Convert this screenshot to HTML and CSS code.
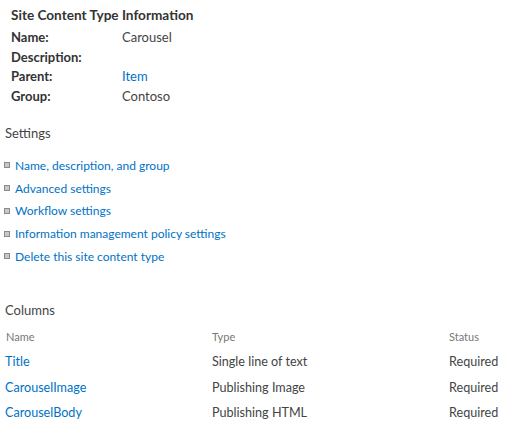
FILE: index.html
```html
<!DOCTYPE html>
<html>
<head>
<meta charset="utf-8">
<link rel="stylesheet" href="styles.css">
</head>
<body>
<div class="page">
  <section class="info">
    <h2 class="info-title">Site Content Type Information</h2>
    <div class="info-grid">
      <div class="label">Name:</div><div class="value">Carousel</div>
      <div class="label">Description:</div><div class="value"></div>
      <div class="label">Parent:</div><div class="value"><a class="link" href="#">Item</a></div>
      <div class="label">Group:</div><div class="value">Contoso</div>
    </div>
  </section>

  <section class="settings">
    <h3 class="section-title">Settings</h3>
    <ul class="settings-list">
      <li><span class="bullet"></span><a class="link" href="#">Name, description, and group</a></li>
      <li><span class="bullet"></span><a class="link" href="#">Advanced settings</a></li>
      <li><span class="bullet"></span><a class="link" href="#">Workflow settings</a></li>
      <li><span class="bullet"></span><a class="link" href="#">Information management policy settings</a></li>
      <li><span class="bullet"></span><a class="link" href="#">Delete this site content type</a></li>
    </ul>
  </section>

  <section class="columns">
    <h3 class="section-title">Columns</h3>
    <div class="col-table">
      <div class="col-row head">
        <div class="c-name">Name</div><div class="c-type">Type</div><div class="c-status">Status</div>
      </div>
      <div class="col-row">
        <div class="c-name"><a class="link" href="#">Title</a></div><div class="c-type">Single line of text</div><div class="c-status">Required</div>
      </div>
      <div class="col-row">
        <div class="c-name"><a class="link" href="#">CarouselImage</a></div><div class="c-type">Publishing Image</div><div class="c-status">Required</div>
      </div>
      <div class="col-row">
        <div class="c-name"><a class="link" href="#">CarouselBody</a></div><div class="c-type">Publishing HTML</div><div class="c-status">Required</div>
      </div>
    </div>
  </section>
</div>
</body>
</html>
```

FILE: styles.css
```css
html, body {
  margin: 0;
  padding: 0;
  background: #fff;
}
body {
  font-family: Lato, "Open Sans", sans-serif;
  font-size: 13px;
  color: #444;
}
.page {
  width: 517px;
  height: 428px;
  overflow: hidden;
}
.link {
  color: #0072c6;
  text-decoration: none;
}
.info {
  padding: 6px 0 0 11px;
}
.info-title {
  margin: 0;
  font-size: 13.6px;
  font-weight: 700;
  color: #333;
  line-height: 19px;
}
.info-grid {
  display: grid;
  grid-template-columns: 111px auto;
  grid-auto-rows: 19.5px;
  margin-top: 3px;
  line-height: 19.5px;
}
.label {
  font-weight: 700;
  color: #333;
}
.value {
  color: #444;
}
.section-title {
  margin: 0;
  font-weight: 400;
  font-size: 13px;
  color: #444;
  line-height: 20px;
  padding-left: 5px;
}
.settings {
  margin-top: 17px;
}
.settings-list {
  list-style: none;
  margin: 11px 0 0 0;
  padding: 0 0 0 4px;
  font-size: 12px;
}
.settings-list li {
  display: flex;
  align-items: center;
  height: 22.75px;
}
.bullet {
  width: 4px;
  height: 4px;
  background: #c8c8c8;
  border: 1px solid #8a8a8a;
  margin-right: 5px;
  flex: none;
}
.columns {
  margin-top: 32px;
}
.col-table {
  margin-top: 6px;
  font-size: 12.6px;
}
.col-row {
  display: flex;
  height: 25.5px;
  align-items: center;
}
.col-row.head {
  height: 20px;
  font-size: 11px;
  color: #777;
  margin-bottom: 2px;
  padding-top: 1px;
}
.c-name {
  width: 207px;
  padding-left: 5px;
}
.col-row.head .c-name {
  padding-left: 6px;
  width: 206px;
}
.c-type {
  width: 237px;
}
.c-status {
  flex: 1;
}
```
